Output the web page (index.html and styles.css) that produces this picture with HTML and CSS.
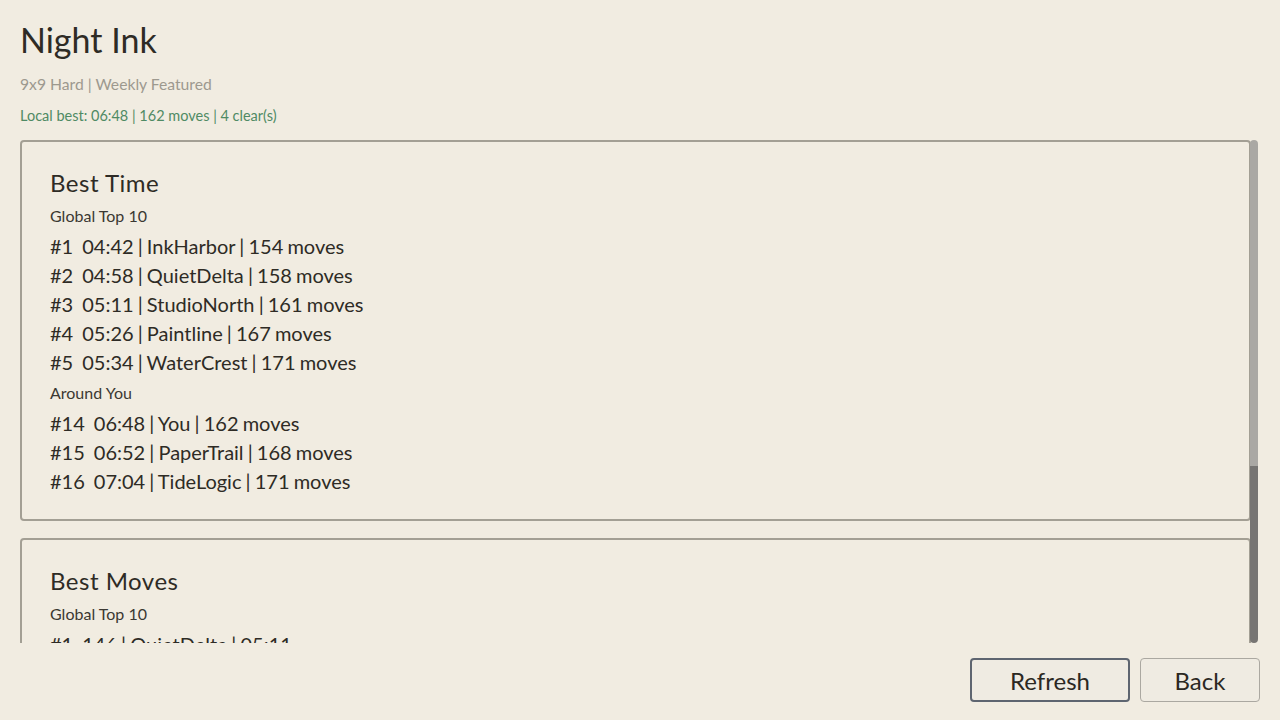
FILE: index.html
```html
<!DOCTYPE html>
<html lang="en">
<head>
<meta charset="utf-8">
<title>Night Ink</title>
<link rel="stylesheet" href="styles.css">
</head>
<body>
<div class="page">
  <header class="head">
    <h1 class="title">Night Ink</h1>
    <div class="meta">9x9 Hard | Weekly Featured</div>
    <div class="local">Local best: 06:48 | 162 moves | 4 clear(s)</div>
  </header>
  <div class="scroller">
    <div class="viewport">
      <section class="card">
        <h2 class="card-title">Best Time</h2>
        <div class="group">Global Top 10</div>
        <ul class="rows">
          <li><span class="rank">#1</span>04:42 | InkHarbor | 154 moves</li>
          <li><span class="rank">#2</span>04:58 | QuietDelta | 158 moves</li>
          <li><span class="rank">#3</span>05:11 | StudioNorth | 161 moves</li>
          <li><span class="rank">#4</span>05:26 | Paintline | 167 moves</li>
          <li><span class="rank">#5</span>05:34 | WaterCrest | 171 moves</li>
        </ul>
        <div class="group">Around You</div>
        <ul class="rows">
          <li><span class="rank">#14</span>06:48 | You | 162 moves</li>
          <li><span class="rank">#15</span>06:52 | PaperTrail | 168 moves</li>
          <li><span class="rank">#16</span>07:04 | TideLogic | 171 moves</li>
        </ul>
      </section>
      <section class="card">
        <h2 class="card-title">Best Moves</h2>
        <div class="group">Global Top 10</div>
        <ul class="rows">
          <li><span class="rank">#1</span>146 | QuietDelta | 05:11</li>
          <li><span class="rank">#2</span>151 | InkHarbor | 04:42</li>
          <li><span class="rank">#3</span>154 | StudioNorth | 05:11</li>
        </ul>
      </section>
    </div>
    <div class="scrollbar">
      <div class="thumb"></div>
      <div class="track"></div>
    </div>
  </div>
  <footer class="actions">
    <button class="btn btn-primary">Refresh</button>
    <button class="btn">Back</button>
  </footer>
</div>
</body>
</html>
```

FILE: styles.css
```css
html, body {
  margin: 0;
  padding: 0;
  background: #f1ece1;
}
body {
  font-family: Lato, "Open Sans", "Liberation Sans", sans-serif;
  color: #2e2b25;
}
.page {
  width: 1280px;
  height: 720px;
  box-sizing: border-box;
  padding: 18px 20px 18px 20px;
  display: flex;
  flex-direction: column;
}
.head {
  display: flex;
  flex-direction: column;
}
.title {
  margin: 0;
  font-size: 34px;
  font-weight: 400;
  line-height: 44px;
  letter-spacing: 0;
}
.meta {
  margin-top: 12px;
  font-size: 15.7px;
  line-height: 20px;
  color: #9d998f;
}
.local {
  margin-top: 12px;
  font-size: 14.5px;
  line-height: 20px;
  color: #4f8a64;
}
.scroller {
  margin-top: 14px;
  height: 503px;
  display: flex;
  flex-direction: row;
}
.viewport {
  flex: 1;
  overflow: hidden;
  display: flex;
  flex-direction: column;
  gap: 17px;
}
.card {
  flex: none;
  border: 2px solid #a39f94;
  border-radius: 4px;
  padding: 26px 28px 23px 28px;
}
.card-title {
  margin: 0;
  font-size: 24px;
  font-weight: 400;
  line-height: 30px;
  letter-spacing: 0.5px;
}
.group {
  margin-top: 8px;
  font-size: 16px;
  line-height: 20px;
  color: #3b3832;
}
.rows {
  list-style: none;
  margin: 6px 0 0 0;
  padding: 0;
}
.rows + .group {
  margin-top: 6px;
}
.rows li {
  font-size: 20px;
  line-height: 29px;
  word-spacing: -1px;
  white-space: nowrap;
}
.rank {
  display: inline-block;
  margin-right: 9px;
}
.scrollbar {
  width: 8px;
  margin-right: 2px;
  margin-left: -1px;
  display: flex;
  flex-direction: column;
  border-radius: 4px;
  overflow: hidden;
}
.thumb {
  height: 326px;
  background: #aaa8a4;
}
.track {
  flex: 1;
  background: #777573;
}
.actions {
  margin-top: 15px;
  display: flex;
  justify-content: flex-end;
  gap: 10px;
}
.btn {
  font-family: inherit;
  font-size: 24px;
  color: #2b2822;
  background: #efebe2;
  border: 1px solid #aba8a1;
  border-radius: 4px;
  height: 44px;
  width: 120px;
  padding: 0;
}
.btn-primary {
  width: 160px;
  border: 2px solid #5e6570;
}
```
